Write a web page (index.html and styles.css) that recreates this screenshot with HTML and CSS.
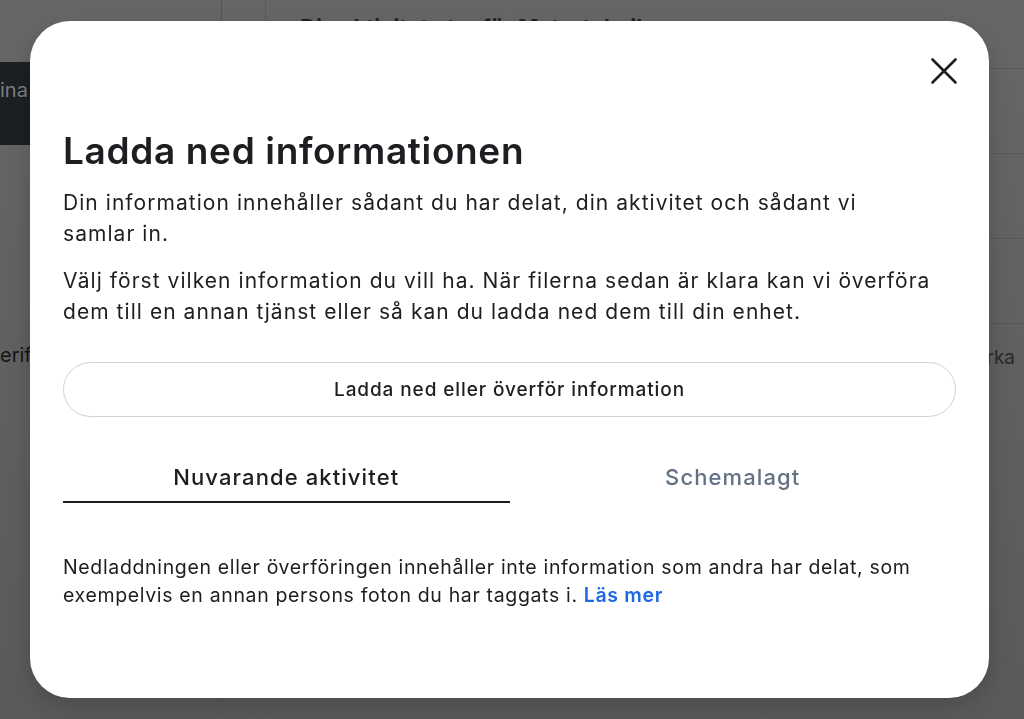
FILE: index.html
```html
<!DOCTYPE html>
<html lang="sv">
<head>
<meta charset="utf-8">
<title>Ladda ned informationen</title>
<link rel="stylesheet" href="styles.css">
</head>
<body>
<div class="page">
  <aside class="sidebar">
    <div class="side-active">ina</div>
    <div class="side-item">erif</div>
  </aside>
  <main class="main">
    <section class="card">
      <div class="card-title">Din aktivitet utanför Meta-teknikerna</div>
      <div class="row"></div>
      <div class="row"></div>
      <div class="row"></div>
      <div class="row-text">Påverka</div>
    </section>
  </main>
</div>

<div class="overlay">
  <div class="modal" role="dialog" aria-labelledby="dlg-title">
    <div class="modal-head">
      <button class="close" aria-label="Stäng">
        <svg width="28" height="28" viewBox="0 0 28 28" aria-hidden="true">
          <path d="M2.5 2.5 L25.5 25.5 M25.5 2.5 L2.5 25.5" stroke="#1c1e21" stroke-width="2.6" stroke-linecap="round" fill="none"/>
        </svg>
      </button>
    </div>
    <h1 id="dlg-title" class="title">Ladda ned informationen</h1>
    <p class="text">Din information innehåller sådant du har delat, din aktivitet och sådant vi samlar&nbsp;in.</p>
    <p class="text">Välj först vilken information du vill ha. När filerna sedan är klara kan vi överföra dem till en annan tjänst eller så kan du ladda ned dem till din enhet.</p>
    <button class="action">Ladda ned eller överför information</button>
    <div class="tabs">
      <div class="tab tab-active">Nuvarande aktivitet</div>
      <div class="tab">Schemalagt</div>
    </div>
    <p class="note">Nedladdningen eller överföringen innehåller inte information som andra har delat, som exempelvis en annan persons foton du har taggats i. <a class="link" href="#">Läs mer</a></p>
  </div>
</div>
</body>
</html>
```

FILE: styles.css
```css
* { box-sizing: border-box; }

html, body {
  margin: 0;
  height: 100%;
}

body {
  background: #626262;
  font-family: "Inter", "Noto Sans", "Liberation Sans", sans-serif;
  color: #1c1e21;
  overflow: hidden;
}

.page {
  display: grid;
  grid-template-columns: 222px 1fr;
  height: 719px;
  background: linear-gradient(#676767, #5a5a5a);
}

.sidebar {
  border-right: 1px solid #555;
  padding-top: 62px;
  overflow: hidden;
}

.side-active {
  height: 83px;
  background: #1c1f24;
  color: #7b7e82;
  font-size: 20px;
  line-height: 56px;
}

.side-item {
  margin-top: 196px;
  font-size: 20px;
  line-height: 28px;
  color: #151515;
}

.main {
  overflow: hidden;
  padding-left: 43px;
}

.card {
  margin-top: -20px;
  border: 1px solid #5a5a5a;
  border-right: none;
  border-radius: 14px 0 0 0;
  min-height: 800px;
}

.card-title {
  padding: 33px 0 0 34px;
  height: 87px;
  font-size: 22px;
  font-weight: 700;
  color: #222;
}

.row {
  height: 85px;
  border-top: 1px solid #575757;
}

.row-text {
  border-top: 1px solid #575757;
  padding: 20px 9px 0 0;
  text-align: right;
  font-size: 19px;
  line-height: 28px;
  color: #2a2a2a;
}

.overlay {
  position: fixed;
  inset: 0;
}

.modal {
  position: absolute;
  left: 30px;
  top: 21px;
  width: 959px;
  height: 677px;
  background: #fff;
  border-radius: 40px;
  padding: 0 33px;
  box-shadow: 0 8px 24px rgba(0, 0, 0, 0.18);
}

.modal-head {
  display: flex;
  justify-content: flex-end;
  padding-top: 36px;
  height: 100px;
}

.close {
  width: 28px;
  height: 28px;
  padding: 0;
  margin-right: -2px;
  border: none;
  background: none;
  display: flex;
}

.title {
  margin: 0 0 6px;
  font-size: 37px;
  line-height: 60px;
  font-weight: 600;
  color: #1c1e21;
  letter-spacing: 0.65px;
}

.text {
  margin: 0 0 16px;
  font-size: 21px;
  line-height: 31px;
  letter-spacing: 1.05px;
  color: #1c1e21;
}

.action {
  display: block;
  width: 100%;
  height: 55px;
  margin-top: 35px;
  border: 1.5px solid #cdd3da;
  border-radius: 28px;
  background: #fff;
  font-family: inherit;
  font-size: 19px;
  font-weight: 500;
  letter-spacing: 0.9px;
  color: #1c1e21;
}

.tabs {
  display: grid;
  grid-template-columns: 1fr 1fr;
  margin-top: 36px;
}

.tab {
  text-align: center;
  font-size: 22px;
  font-weight: 500;
  letter-spacing: 1.1px;
  line-height: 48px;
  height: 50px;
  color: #627184;
}

.tab-active {
  color: #1c1e21;
  border-bottom: 2px solid #1c1e21;
}

.note {
  margin: 50px 0 0;
  font-size: 19.5px;
  line-height: 28px;
  letter-spacing: 0.65px;
  color: #1c1e21;
}

.link {
  color: #1d6ae5;
  font-weight: 600;
  text-decoration: none;
}
```
